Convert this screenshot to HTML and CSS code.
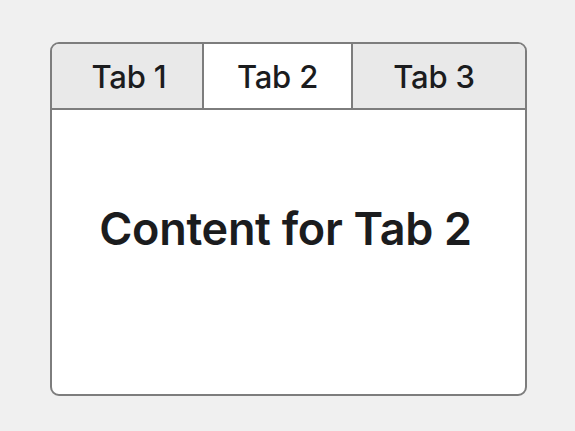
FILE: index.html
```html
<!DOCTYPE html>
<html>
<head>
<meta charset="utf-8">
<link rel="stylesheet" href="styles.css">
</head>
<body>
<div class="card">
  <div class="tabs">
    <div class="tab tab-1">Tab 1</div>
    <div class="tab tab-2 active">Tab 2</div>
    <div class="tab tab-3">Tab 3</div>
  </div>
  <div class="panel">Content for Tab 2</div>
</div>
</body>
</html>
```
FILE: styles.css
```css
* { box-sizing: border-box; }
html, body { margin: 0; padding: 0; }
body {
  background: #f0f0f0;
  font-family: Inter, "Liberation Sans", Arial, sans-serif;
  color: #1b1c1e;
  padding: 42px 0 0 50px;
  width: 575px;
  height: 431px;
}
.card {
  width: 477px;
  height: 354px;
  border: 2px solid #7d7d7d;
  border-radius: 9px;
  background: #fff;
  overflow: hidden;
  display: flex;
  flex-direction: column;
}
.tabs {
  display: flex;
  height: 66px;
  border-bottom: 2px solid #7d7d7d;
}
.tab {
  display: flex;
  align-items: center;
  justify-content: center;
  font-size: 31px;
  font-weight: 500;
  letter-spacing: -0.2px;
  background: #e9e9e9;
  padding-top: 1px;
}
.tab-1 { width: 152px; border-right: 2px solid #7d7d7d; padding-left: 4px; }
.tab-2 { width: 149px; border-right: 2px solid #7d7d7d; }
.tab-3 { flex: 1; padding-right: 10px; }
.tab.active { background: #fff; }
.panel {
  flex: 1;
  display: flex;
  align-items: center;
  justify-content: center;
  font-size: 45px;
  font-weight: 600;
  letter-spacing: -0.3px;
  padding-bottom: 48px;
  padding-right: 6px;
}
```
